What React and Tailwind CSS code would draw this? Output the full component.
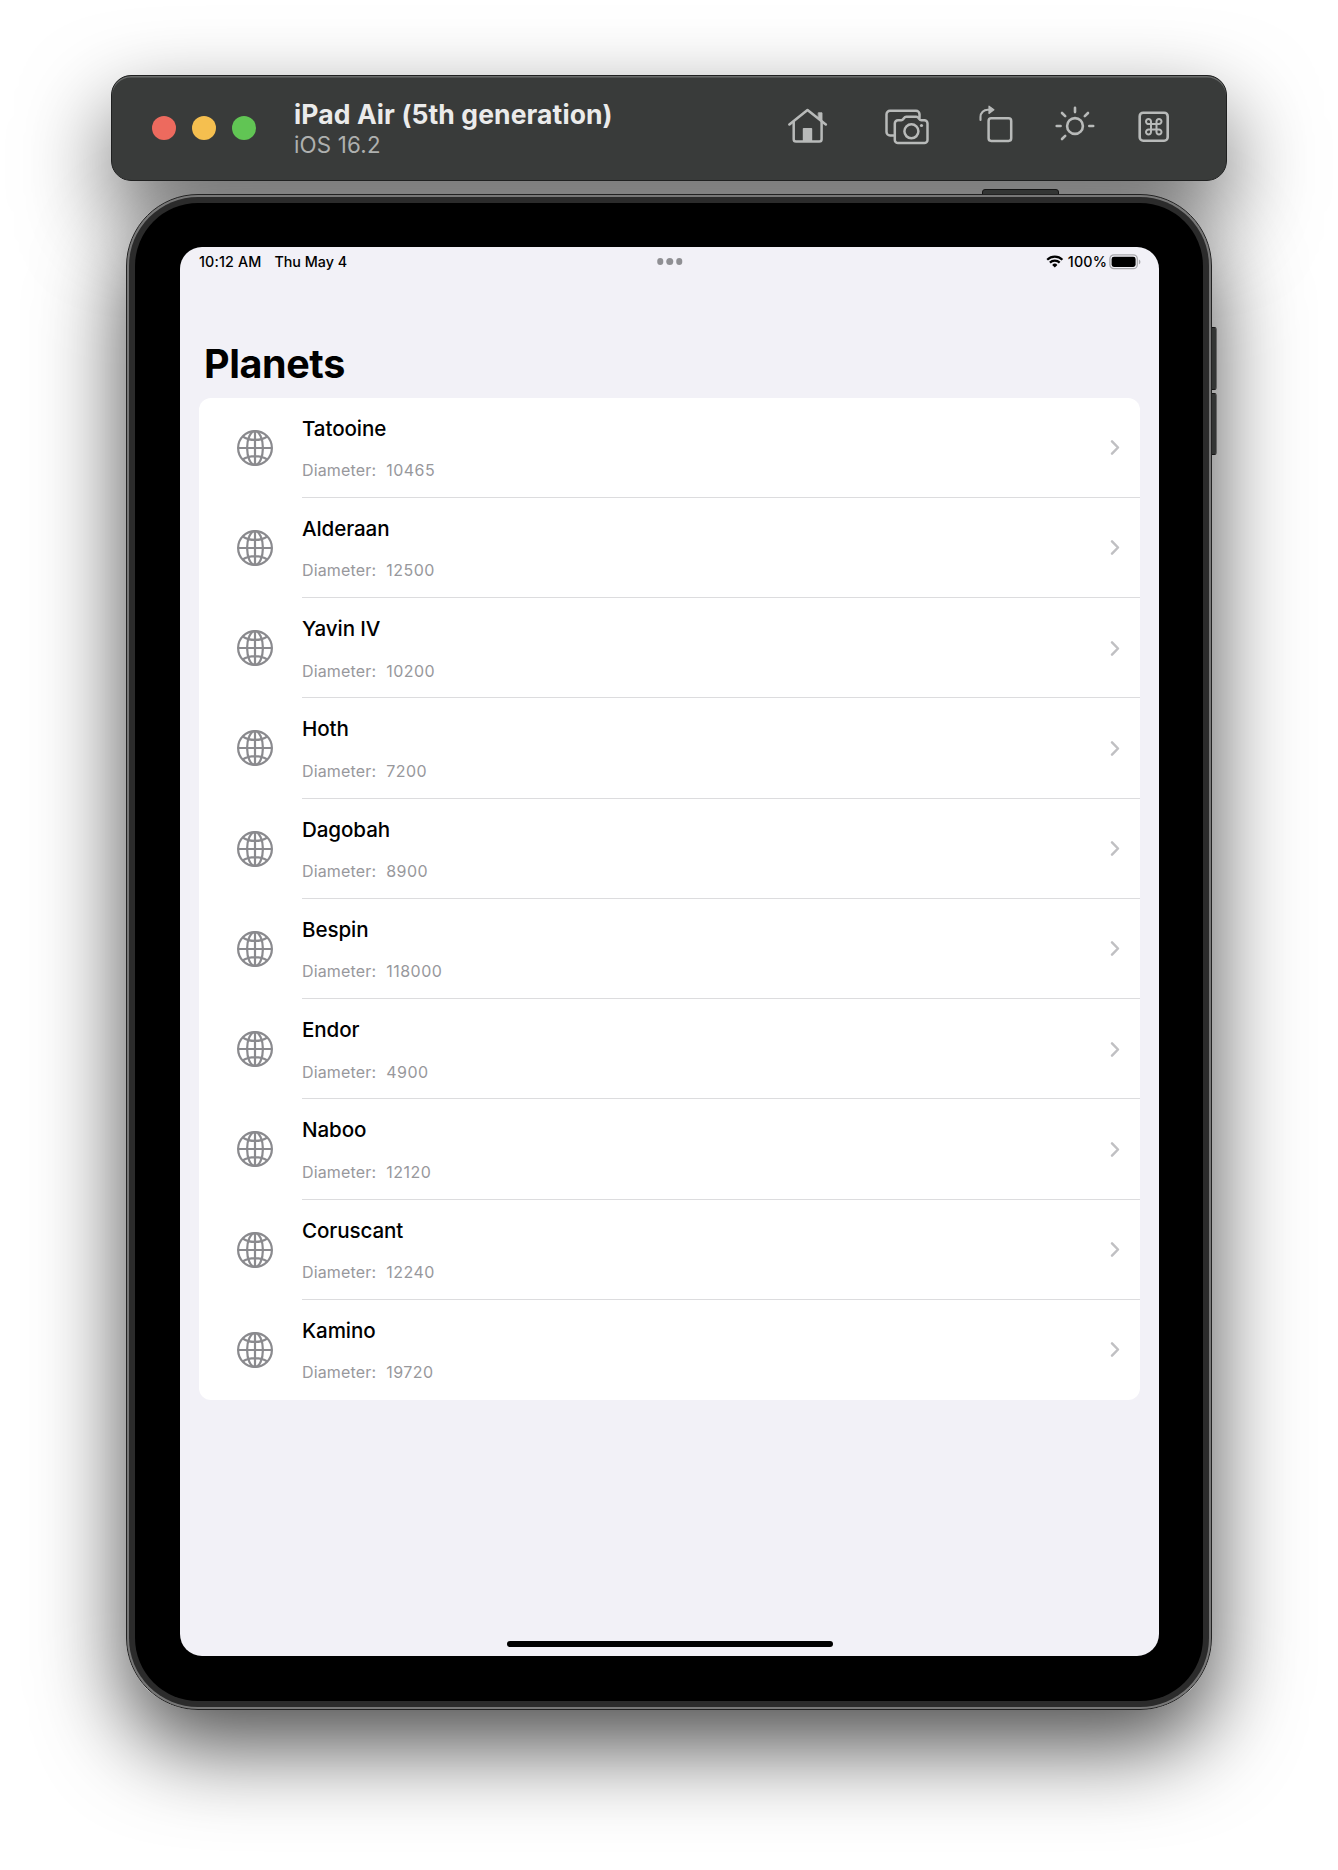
import React from "react";

const planets = [
  ["Tatooine", "10465"],
  ["Alderaan", "12500"],
  ["Yavin IV", "10200"],
  ["Hoth", "7200"],
  ["Dagobah", "8900"],
  ["Bespin", "118000"],
  ["Endor", "4900"],
  ["Naboo", "12120"],
  ["Coruscant", "12240"],
  ["Kamino", "19720"],
];

function HomeIcon() {
  return (
    <svg width="40" height="36" viewBox="0 0 40 36" fill="none" stroke="#b8bab9" strokeWidth="2.5" strokeLinecap="round" strokeLinejoin="round">
      <path d="M1.4 16.4 19.5 2 37.8 16.4" strokeWidth="2.6" />
      <path d="M5.7 14v17.2a2.3 2.3 0 0 0 2.3 2.3h23.3a2.3 2.3 0 0 0 2.3-2.3V14" />
      <path d="M30.6 4.8h3.4v8.5l-3.4-2.7z" fill="#b8bab9" strokeWidth="0.9" />
      <path d="M15.6 20h7.8a.8.8 0 0 1 .8.8V33.7H14.8V20.8a.8.8 0 0 1 .8-.8z" fill="#b8bab9" stroke="none" />
    </svg>
  );
}

function CameraIcon() {
  return (
    <svg width="44" height="36" viewBox="0 0 44 36" fill="none" stroke="#b8bab9" strokeWidth="2.5" strokeLinecap="round" strokeLinejoin="round">
      <path d="M8.5 26.5H5a3.5 3.5 0 0 1-3.5-3.5V5.3A3.5 3.5 0 0 1 5 1.8h26a3.5 3.5 0 0 1 3.5 3.5V8.5" />
      <path d="M13 11.2h3.2c1 0 1.6-.4 2.1-1.2l.8-1.1c.5-.7 1.2-1.1 2.1-1.1h10.2c.9 0 1.6.4 2.1 1.1l.8 1.1c.5.8 1.1 1.2 2.1 1.2H39.3a3.2 3.2 0 0 1 3.2 3.2v16.5a3.2 3.2 0 0 1-3.2 3.2H13a3.2 3.2 0 0 1-3.2-3.2V14.4a3.2 3.2 0 0 1 3.2-3.2z" />
      <circle cx="26.4" cy="22.3" r="7" />
      <circle cx="36.5" cy="16.5" r="1.6" fill="#b8bab9" stroke="none" />
    </svg>
  );
}

function RotateIcon() {
  return (
    <svg width="34" height="38" viewBox="0 0 34 38" fill="none" stroke="#b8bab9" strokeWidth="2.5" strokeLinecap="round" strokeLinejoin="round">
      <rect x="9.6" y="13.3" width="22.6" height="22.6" rx="2.6" />
      <path d="M1.5 15V12a7.3 7.3 0 0 1 7.3-7.3H10" strokeWidth="2.1" />
      <path d="M10 1.2l4.9 3.6-4.9 3.6z" fill="#b8bab9" strokeWidth="1.2" />
    </svg>
  );
}

function SunIcon() {
  return (
    <svg width="40" height="36" viewBox="0 0 40 36" fill="none" stroke="#b8bab9" strokeWidth="2.6" strokeLinecap="round">
      <circle cx="20" cy="20" r="7.9" />
      <path d="M20 1.8v4.3M1.7 20h3.9M34.3 20h3.9M7 7l3.2 3.2M33 7l-3.2 3.2M7 33l3.2-3.2" />
    </svg>
  );
}

function CommandIcon() {
  return (
    <svg width="32" height="32" viewBox="0 0 32 32" fill="none" stroke="#b8bab9" strokeWidth="2.6" strokeLinejoin="round">
      <rect x="1.7" y="1.7" width="28" height="28" rx="3.5" />
      <path strokeWidth="2" d="M13 13h5.5v5.5H13zM13 13h-2.3a2.5 2.5 0 1 1 2.3-2.4zM18.5 13v-2.4a2.5 2.5 0 1 1 2.4 2.4zM18.5 18.5h2.4a2.5 2.5 0 1 1-2.4 2.4zM13 18.5v2.4a2.5 2.5 0 1 1-2.4-2.4z" />
    </svg>
  );
}

function Globe() {
  return (
    <svg className="shrink-0" width="38" height="38" viewBox="0 0 38 38" fill="none" stroke="#8a8a8e" strokeWidth="2.2">
      <circle cx="19" cy="19" r="16.9" />
      <ellipse cx="19" cy="19" rx="7.9" ry="16.9" />
      <path d="M19 2v34M2 19h34M6.7 7.5c6.8 4.6 17.8 4.6 24.6 0M6.7 30.5c6.8-4.6 17.8-4.6 24.6 0" />
    </svg>
  );
}

function Wifi() {
  return (
    <svg width="18" height="13" viewBox="0 0 18 13" fill="none" stroke="#000" strokeWidth="2.2">
      <path d="M1.2 4.7a11 11 0 0 1 15.2 0M3.9 7.6a7 7 0 0 1 9.8 0" />
      <path d="M8.8 12.5 6.2 9.9a3.7 3.7 0 0 1 5.2 0z" fill="#000" stroke="none" />
    </svg>
  );
}

function Battery() {
  return (
    <svg width="33" height="16" viewBox="0 0 33 16" fill="none">
      <rect x="0.9" y="0.9" width="27.4" height="13.8" rx="4" stroke="#a9a9ad" strokeWidth="1.3" />
      <rect x="2.6" y="2.7" width="24" height="10.2" rx="2.3" fill="#000" />
      <path d="M29.9 5.5v4.7c1-.4 1.5-1.2 1.5-2.3s-.5-2-1.5-2.4z" fill="#a9a9ad" />
    </svg>
  );
}

function Toolbar() {
  return (
    <header className="relative flex h-[106px] w-[1116px] items-start rounded-[20px] border border-[#1f2020] bg-[#393b3a] shadow-[inset_0_1.5px_0_#6a6c6b]">
      <div className="ml-[40px] mt-[40px] flex gap-4">
        <span className="size-6 rounded-full bg-[#ed6a5e]" />
        <span className="size-6 rounded-full bg-[#f5bf4f]" />
        <span className="size-6 rounded-full bg-[#61c554]" />
      </div>
      <div className="ml-[38px] mt-[22px] w-[480px] whitespace-nowrap">
        <h1 className="text-[26.5px] leading-[32px] font-bold tracking-[0.1px] text-[#ebebeb]">iPad Air (5th generation)</h1>
        <p className="text-[22.3px] leading-[29px] tracking-[0.2px] text-[#aeb0af]">iOS 16.2</p>
      </div>
      <div className="flex">
        <div className="ml-[14px] mt-[32px]"><HomeIcon /></div>
        <div className="ml-[57px] mt-[32.5px]"><CameraIcon /></div>
        <div className="ml-[50px] mt-[29px]"><RotateIcon /></div>
        <div className="ml-[42px] mt-[30px]"><SunIcon /></div>
        <div className="ml-[43px] mt-[35px]"><CommandIcon /></div>
      </div>
    </header>
  );
}

function StatusBar() {
  return (
    <div className="relative flex h-[29px] items-center justify-between pl-[19px] pr-[17px] text-[14.3px] font-medium tracking-[0.15px] text-black">
      <div className="flex gap-[13px]">
        <span>10:12 AM</span>
        <span className="tracking-normal">Thu May 4</span>
      </div>
      <div className="absolute left-1/2 top-[11px] flex -translate-x-1/2 gap-[3px]">
        <i className="size-[6.5px] rounded-full bg-[#8f8f93]" />
        <i className="size-[6.5px] rounded-full bg-[#8f8f93]" />
        <i className="size-[6.5px] rounded-full bg-[#8f8f93]" />
      </div>
      <div className="flex items-center">
        <Wifi />
        <span className="ml-[4px] mr-[2px]">100%</span>
        <Battery />
      </div>
    </div>
  );
}

function PlanetRow({ name, diameter, last }) {
  return (
    <li className="flex h-[100.28px] items-stretch pl-[37px]">
      <div className="flex w-[66px] items-center"><Globe /></div>
      <div className={last ? "flex flex-1 justify-between" : "flex flex-1 justify-between border-b border-[#dcdcde]"}>
        <div>
          <h3 className="mt-[17px] text-[20.6px] leading-[28px] font-[450] tracking-[-0.1px] text-black">{name}</h3>
          <p className="mt-[15.5px] flex gap-[10px] text-[16px] leading-[24px] text-[#98989c]">
            <span className="tracking-[0.15px]">Diameter:</span>
            <span className="tracking-[0.5px]">{diameter}</span>
          </p>
        </div>
        <svg className="mr-[19.5px] mt-[41.5px]" width="12" height="18" viewBox="0 0 12 18" fill="none" stroke="#c0c0c3" strokeWidth="2.5" strokeLinecap="round" strokeLinejoin="round">
          <path d="M3 2.3 9 8.5 3 14.7" />
        </svg>
      </div>
    </li>
  );
}

export default function App() {
  return (
    <main className="flex h-[1870px] w-[1338px] flex-col items-start overflow-hidden bg-white pt-[75px] font-['Inter',sans-serif]">
      <div className="relative z-10 ml-[111px]"><Toolbar /></div>
      <div className="relative ml-[126px] mt-[13px] h-[1516px] w-[1086px]">
        {/* cast shadows, kept below both windows */}
        <div className="absolute -left-[15px] -top-[119px] h-[106px] w-[1116px] rounded-[20px] shadow-[0_36px_88px_rgba(0,0,0,0.6)]" />
        <div className="absolute inset-0 rounded-[72px] shadow-[0_36px_88px_rgba(0,0,0,0.7)]" />
        <span className="absolute left-[856px] top-[-5px] h-[8px] w-[77px] rounded-t-[3px] border border-[#151515] bg-[#333534]" />
        <span className="absolute left-[1083px] top-[133px] h-[63px] w-[8px] rounded-r-[3px] border border-[#151515] border-r-[#666] bg-[#333534]" />
        <span className="absolute left-[1083px] top-[199px] h-[62px] w-[8px] rounded-r-[3px] border border-[#151515] border-r-[#666] bg-[#333534]" />
        <div className="relative h-full rounded-[72px] border border-[#222] bg-[#777] p-[2px]">
          <div className="h-full rounded-[69px] bg-[#2b2b2b] p-[6px]">
            <div className="h-full rounded-[63px] bg-black pl-[45px] pt-[44px]">
              <section className="flex h-[1409px] w-[979px] flex-col rounded-[22px] bg-[#f2f1f7]">
                <StatusBar />
                <h2 className="ml-[24px] mt-[62px] text-[39.5px] leading-[52px] font-bold tracking-[-0.4px] text-black">Planets</h2>
                <ul className="ml-[19px] mt-[7.5px] w-[941px] rounded-[12px] bg-white">
                  {planets.map(([name, diameter], i) => (
                    <PlanetRow key={name} name={name} diameter={diameter} last={i === planets.length - 1} />
                  ))}
                </ul>
                <div className="mb-[9px] mt-auto h-[6.5px] w-[326px] self-center rounded-full bg-black" />
              </section>
            </div>
          </div>
        </div>
      </div>
    </main>
  );
}
